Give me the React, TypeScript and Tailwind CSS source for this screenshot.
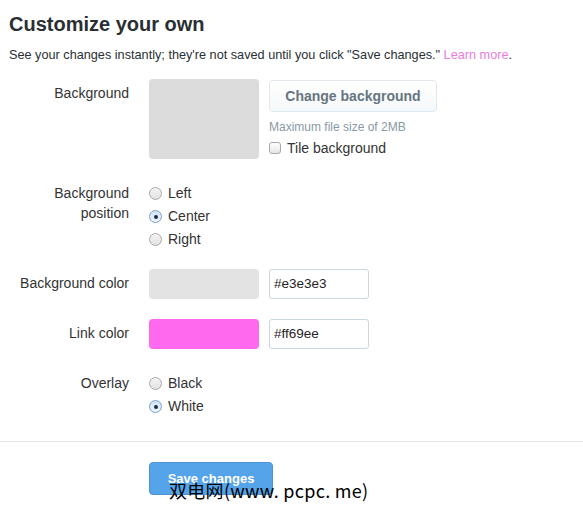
import React from 'react';

function Radio({ checked, label }: { checked?: boolean; label: string }) {
    return (
        <div className="flex items-center h-[23px]">
            <span
                className={
                    checked
                        ? 'w-[13px] h-[13px] rounded-full border border-[#7d9fc9] bg-gradient-to-b from-[#cfe2f7] to-[#eef5fd] flex items-center justify-center'
                        : 'w-[13px] h-[13px] rounded-full border border-[#a9a9a9] bg-gradient-to-b from-[#f4f4f4] to-[#e2e2e2]'
                }
            >
                {checked && <span className="w-[4px] h-[4px] rounded-full bg-[#1c2d3f]" />}
            </span>
            <span className="ml-[6px] text-[14px] text-[#333]">{label}</span>
        </div>
    );
}

function Row({ label, children, className }: { label: React.ReactNode; children: React.ReactNode; className?: string }) {
    return (
        <div className={'flex ' + (className ?? '')}>
            <div className="w-[129px] shrink-0 text-right text-[14px] leading-[20px] text-[#333]">{label}</div>
            <div className="ml-[20px]">{children}</div>
        </div>
    );
}

export default function App() {
    return (
        <div className="relative w-[583px] h-[514px] bg-white overflow-hidden" style={{ fontFamily: '"Liberation Sans", Arial, sans-serif' }}>
            <div className="px-[9px] pt-[11px]">
                <h1 className="text-[20px] leading-[26px] font-bold text-[#292f33]">Customize your own</h1>
                <p className="mt-[9px] text-[12.7px] leading-[18px] text-[#292f33]">
                    See your changes instantly; they're not saved until you click "Save changes."{' '}
                    <span className="text-[#e77ee0]">Learn more</span>.
                </p>
            </div>

            {/* Background */}
            <Row label={<div className="pt-[4px]">Background</div>} className="mt-[15px]">
                <div className="flex gap-[10px]">
                    <div className="w-[110px] h-[80px] rounded-[4px] bg-[#dcdcdc]" />
                    <div className="pt-[1px]">
                        <div className="w-[168px] h-[32px] rounded-[4px] border border-[#e1e8ed] bg-gradient-to-b from-white to-[#f5f8fa] flex items-center justify-center text-[14px] font-bold text-[#66757f]">
                            Change background
                        </div>
                        <div className="mt-[7px] text-[12px] leading-[16px] text-[#8899a6]">Maximum file size of 2MB</div>
                        <div className="mt-[4px] flex items-center">
                            <span className="w-[12px] h-[12px] rounded-[3px] border border-[#a9a9a9] bg-gradient-to-b from-white to-[#e6e6e6]" />
                            <span className="ml-[6px] text-[14px] leading-[18px] text-[#333]">Tile background</span>
                        </div>
                    </div>
                </div>
            </Row>

            {/* Background position */}
            <Row label={<>Background<br />position</>} className="mt-[24px]">
                <div className="-mt-[1px]">
                    <Radio label="Left" />
                    <Radio label="Center" checked />
                    <Radio label="Right" />
                </div>
            </Row>

            {/* Background color */}
            <Row label={<div className="pt-[4px]">Background color</div>} className="mt-[18px]">
                <div className="flex gap-[10px]">
                    <div className="w-[110px] h-[30px] rounded-[4px] bg-[#e3e3e3]" />
                    <div className="w-[100px] h-[30px] rounded-[3px] border border-[#ccd6dd] flex items-center px-[4px] text-[13.5px] font-medium text-[#1f2326]">#e3e3e3</div>
                </div>
            </Row>

            {/* Link color */}
            <Row label={<div className="pt-[4px]">Link color</div>} className="mt-[20px]">
                <div className="flex gap-[10px]">
                    <div className="w-[110px] h-[30px] rounded-[4px] bg-[#ff69ee]" />
                    <div className="w-[100px] h-[30px] rounded-[3px] border border-[#ccd6dd] flex items-center px-[4px] text-[13.5px] font-medium text-[#1f2326]">#ff69ee</div>
                </div>
            </Row>

            {/* Overlay */}
            <Row label="Overlay" className="mt-[24px]">
                <div className="-mt-[1px]">
                    <Radio label="Black" />
                    <Radio label="White" checked />
                </div>
            </Row>

            <div className="mt-[23px] border-t border-[#e8e8e8]" />

            <div className="pl-[149px] pt-[20px]">
                <div className="w-[124px] h-[33px] rounded-[4px] bg-[#55a3e8] border border-[#4a94d6] flex items-center justify-center text-[13px] font-bold text-white">
                    Save changes
                </div>
            </div>

            <div
                className="absolute left-[169px] top-[479px] text-[18px] leading-[22px] text-black tracking-[0.3px]"
                style={{ fontFamily: '"Noto Sans CJK SC", "Liberation Sans", sans-serif' }}
            >
                双电网(www. pcpc. me)
            </div>
        </div>
    );
}
